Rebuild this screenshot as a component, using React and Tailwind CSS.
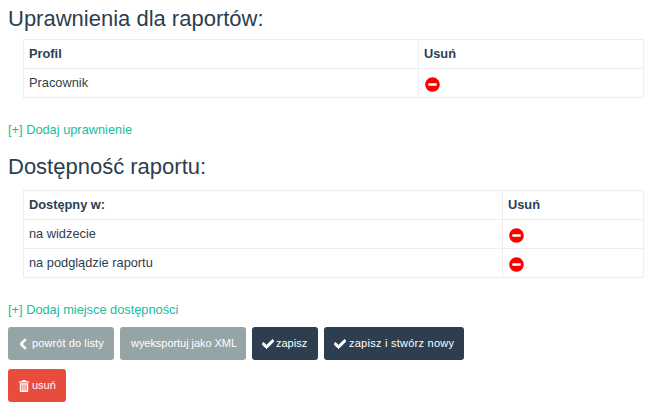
import React from "react";
import { FaChevronLeft, FaCheck, FaMinusCircle } from "react-icons/fa";

function TrashIcon() {
  return (
    <svg viewBox="0 0 10 12" className="h-[12px] w-[10px]" fill="currentColor" aria-hidden="true">
      <path d="M3.4 0h3.2l.7 1.3H10v1.1H0V1.3h2.7z" />
      <path fillRule="evenodd" d="M.8 3.2h8.4v7.8c0 .6-.4 1-1 1H1.8c-.6 0-1-.4-1-1zM2.4 4.4v6.2h.9V4.4zM4.55 4.4v6.2h.9V4.4zM6.7 4.4v6.2h.9V4.4z" />
    </svg>
  );
}

function Tbl({ head, rows, firstW }) {
  return (
    <div className="ml-[15px] mr-[10px]">
      <table className="w-full table-fixed border-collapse border border-[#eeeeee] text-[12.8px] leading-[17px] text-[#2c3e50]">
        <colgroup>
          <col className={firstW} />
          <col />
        </colgroup>
        <thead>
          <tr>
            <th className="h-[29px] border border-[#eeeeee] px-[5px] pt-[4px] pb-[6px] text-left font-bold">{head}</th>
            <th className="h-[29px] border border-[#eeeeee] px-[5px] pt-[4px] pb-[6px] text-left font-bold">Usuń</th>
          </tr>
        </thead>
        <tbody>
          {rows.map((r) => (
            <tr key={r}>
              <td className="h-[29px] border border-[#eeeeee] px-[5px] pt-[4px] pb-[6px]">{r}</td>
              <td className="h-[29px] border border-[#eeeeee] px-[5px] pt-[5px] pb-[5px]">
                <FaMinusCircle className="mt-[2px] ml-[0.5px] text-[15px] text-[#ff0000]" />
              </td>
            </tr>
          ))}
        </tbody>
      </table>
    </div>
  );
}

function Btn({ bg, extra = "", children }) {
  return (
    <button className={`flex h-[33px] items-center rounded-[3px] text-[11px] text-white ${bg} ${extra}`}>
      {children}
    </button>
  );
}

export default function App() {
  return (
    <div className="h-[404px] w-[662px] overflow-hidden bg-white px-[8px] font-['Liberation_Sans',Arial,sans-serif] text-[#2c3e50]">
      <h3 className="pt-[6px] text-[22px] leading-[26px] font-normal">Uprawnienia dla raportów:</h3>
      <div className="mt-[7px]">
        <Tbl head="Profil" rows={["Pracownik"]} firstW="w-[395px]" />
      </div>
      <a className="mt-[23px] block text-[12.8px] leading-[17px] text-[#1abc9c]">[+] Dodaj uprawnienie</a>
      <h3 className="mt-[16px] text-[22px] leading-[26px] font-normal">Dostępność raportu:</h3>
      <div className="mt-[10px]">
        <Tbl head="Dostępny w:" rows={["na widżecie", "na podglądzie raportu"]} firstW="w-[479px]" />
      </div>
      <a className="mt-[23px] block text-[12.8px] leading-[17px] text-[#1abc9c]">[+] Dodaj miejsce dostępności</a>
      <div className="mt-[9px] flex gap-[6px]">
        <Btn bg="bg-[#95a5a6]" extra="w-[106px] pl-[9px] gap-[3px] tracking-[0.1px]">
          <FaChevronLeft className="text-[12px]" stroke="currentColor" strokeWidth={40} /> powrót do listy
        </Btn>
        <Btn bg="bg-[#95a5a6]" extra="w-[126px] pl-[11px] tracking-[-0.05px]">wyeksportuj jako XML</Btn>
        <Btn bg="bg-[#2c3e50]" extra="w-[66px] pl-[10px] gap-[2px]">
          <FaCheck className="text-[12px]" stroke="currentColor" strokeWidth={40} /> zapisz
        </Btn>
        <Btn bg="bg-[#2c3e50]" extra="w-[140px] pl-[10px] gap-[3px] tracking-[0.25px]">
          <FaCheck className="text-[12px]" stroke="currentColor" strokeWidth={40} /> zapisz i stwórz nowy
        </Btn>
      </div>
      <div className="mt-[9px] flex">
        <Btn bg="bg-[#e74c3c]" extra="w-[58px] pl-[11px] gap-[3px]"><TrashIcon /> usuń</Btn>
      </div>
    </div>
  );
}
